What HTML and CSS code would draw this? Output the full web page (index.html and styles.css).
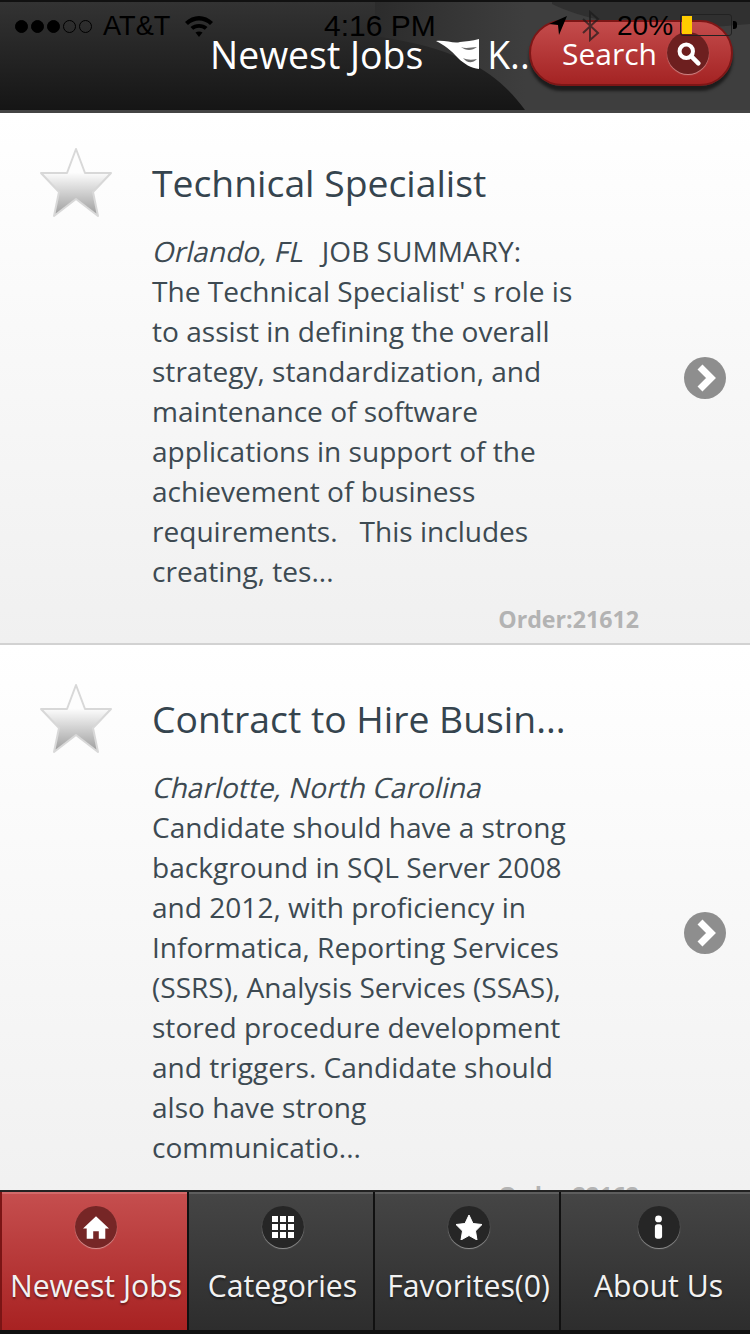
FILE: index.html
```html
<!DOCTYPE html>
<html lang="en">
<head>
  <meta charset="UTF-8">
  <meta name="viewport" content="width=device-width, initial-scale=1.0">
  <title>Newest Jobs</title>
  <link rel="stylesheet" href="styles.css">
</head>
<body>
  <div class="screen">
    <header class="topbar">
      <svg class="swoosh" width="750" height="108" viewBox="0 0 750 108">
        <defs>
          <linearGradient id="swooshFill" x1="0" y1="0" x2="1" y2="0">
            <stop offset="0" stop-color="#2c2c2c"/>
            <stop offset="0.400" stop-color="#3e3e3e"/>
          </linearGradient>
        </defs>
        <path d="M375 0 H750 V108 H525 C500 75 470 48 375 34 Z" fill="url(#swooshFill)"/>
        <path d="M552 2 C590 20 650 32 750 22 V0 H552 Z" fill="#303030"/>
      </svg>

      <div class="status">
        <div class="status-left">
          <span class="dots"><i class="on"></i><i class="on"></i><i class="on"></i><i></i><i></i></span>
          <span class="carrier">AT&amp;T</span>
          <svg class="wifi" width="30" height="24" viewBox="0 0 30 24">
            <path d="M1 8 C9 0 21 0 29 8 L26 11 C20 5 10 5 4 11 Z" fill="#000"/>
            <path d="M6.500 13 C11 9 19 9 23.500 13 L20.800 15.700 C17.500 13 12.500 13 9.200 15.700 Z" fill="#000"/>
            <path d="M11.500 18.500 C13.500 17 16.500 17 18.500 18.500 L15 23 Z" fill="#000"/>
          </svg>
        </div>
        <div class="status-time">4:16 PM</div>
        <div class="status-right">
          <svg width="20" height="22" viewBox="0 0 20 22"><path d="M19 1 L1 9 L10 10 L11 20 Z" fill="#000"/></svg>
          <svg class="bt" width="20" height="32" viewBox="0 0 20 32"><path d="M2 9 L17 23 L9 30 V2 L17 9 L2 23" fill="none" stroke="#1c1c1c" stroke-width="2"/></svg>
          <span class="pct">20%</span>
          <span class="battery"><b></b></span>
        </div>
      </div>

      <div class="bar">
        <h1 class="page-title">Newest Jobs</h1>
        <svg class="logo" width="44" height="32" viewBox="0 0 44 32">
          <path d="M0 3 C10 2 18 6 24 4 C30 3 36 3 43 1 L43 31 C35 30 28 26 22 20 C15 12 8 7 0 3 Z" fill="#fff"/>
          <path d="M25 9 C30 11 36 9 41 9 C36 13 30 13 25 9 Z M27 20 C31 22 36 22 41 21 C36 26 31 25 27 20 Z" fill="#6a6a6a"/>
        </svg>
        <span class="brand">K..</span>
        <button class="search-btn">
          <span>Search</span>
          <span class="round round-red">
            <svg width="25" height="25" viewBox="0 0 28 28">
              <circle cx="11.500" cy="11.500" r="7.500" fill="none" stroke="#fff" stroke-width="4.500"/>
              <path d="M17 17 L25 25" stroke="#fff" stroke-width="5" stroke-linecap="round"/>
            </svg>
          </span>
        </button>
      </div>
    </header>

    <main class="list">
      <article class="job">
        <svg class="star" width="76" height="74" viewBox="0 0 76 74">
          <defs>
            <linearGradient id="starFill" x1="0" y1="0" x2="0" y2="1">
              <stop offset="0.350" stop-color="#fdfdfd"/>
              <stop offset="1" stop-color="#9c9c9c"/>
            </linearGradient>
          </defs>
          <path d="M38 3 L47 27 L73 27 L55 46 L60 70 L38 53 L16 70 L21 46 L3 27 L29 27 Z" fill="url(#starFill)" stroke="#d8d8d8" stroke-width="2" stroke-linejoin="round"/>
        </svg>
        <div class="job-body">
          <h2 class="job-title">Technical Specialist</h2>
          <p class="job-text"><em>Orlando, FL</em>&nbsp;&nbsp; JOB SUMMARY: The Technical Specialist' s role is to assist in defining the overall strategy, standardization, and maintenance of software applications in support of the achievement of business requirements. &nbsp; This includes creating, tes...</p>
          <div class="job-order">Order:21612</div>
        </div>
        <svg class="chevron" width="44" height="44" viewBox="0 0 44 44">
          <circle cx="22" cy="22" r="21" fill="#8e8e8e"/>
          <path d="M17 11 L28 22 L17 33" fill="none" stroke="#fff" stroke-width="7"/>
        </svg>
      </article>

      <article class="job">
        <svg class="star" width="76" height="74" viewBox="0 0 76 74">
          <path d="M38 3 L47 27 L73 27 L55 46 L60 70 L38 53 L16 70 L21 46 L3 27 L29 27 Z" fill="url(#starFill)" stroke="#d8d8d8" stroke-width="2" stroke-linejoin="round"/>
        </svg>
        <div class="job-body">
          <h2 class="job-title">Contract to Hire Busin...</h2>
          <p class="job-text"><em>Charlotte, North Carolina</em> Candidate should have a strong background in SQL Server 2008 and 2012, with proficiency in Informatica, Reporting Services (SSRS), Analysis Services (SSAS), stored procedure development and triggers. Candidate should also have strong communicatio...</p>
          <div class="job-order">Order:22162</div>
        </div>
        <svg class="chevron" width="44" height="44" viewBox="0 0 44 44">
          <circle cx="22" cy="22" r="21" fill="#8e8e8e"/>
          <path d="M17 11 L28 22 L17 33" fill="none" stroke="#fff" stroke-width="7"/>
        </svg>
      </article>
    </main>

    <nav class="tabs">
      <a class="tab active">
        <span class="round">
          <svg width="26" height="23" viewBox="0 0 28 24"><path d="M14 0 L28 13 H24 V24 H17 V16 H11 V24 H4 V13 H0 Z" fill="#fff"/></svg>
        </span>
        <span class="tab-label">Newest Jobs</span>
      </a>
      <a class="tab">
        <span class="round">
          <svg width="22" height="22" viewBox="0 0 22 22" fill="#fff">
            <rect width="6" height="6"/><rect x="8" width="6" height="6"/><rect x="16" width="6" height="6"/>
            <rect y="8" width="6" height="6"/><rect x="8" y="8" width="6" height="6"/><rect x="16" y="8" width="6" height="6"/>
            <rect y="16" width="6" height="6"/><rect x="8" y="16" width="6" height="6"/><rect x="16" y="16" width="6" height="6"/>
          </svg>
        </span>
        <span class="tab-label">Categories</span>
      </a>
      <a class="tab">
        <span class="round">
          <svg width="26" height="25" viewBox="0 0 26 25"><path d="M13 0 L17 8.500 L26 9.500 L19.500 16 L21 25 L13 20.500 L5 25 L6.500 16 L0 9.500 L9 8.500 Z" fill="#fff" stroke="#fff" stroke-linejoin="round"/></svg>
        </span>
        <span class="tab-label">Favorites(0)</span>
      </a>
      <a class="tab">
        <span class="round">
          <svg width="9" height="24" viewBox="0 0 10 26"><circle cx="5" cy="4" r="3.800" fill="#fff"/><rect x="1" y="10" width="8" height="16" rx="3" fill="#fff"/></svg>
        </span>
        <span class="tab-label">About Us</span>
      </a>
    </nav>
  </div>
</body>
</html>
```

FILE: styles.css
```css
* {
  box-sizing: border-box;
}
body {
  margin: 0;
  font-family: "Open Sans", sans-serif;
  background-color: #fff;
}
.screen {
  width: 750px;
  height: 1334px;
  display: flex;
  flex-direction: column;
  overflow: hidden;
}

/* header */
.topbar {
  position: relative;
  height: 113px;
  flex: none;
  background: linear-gradient(#333333, #151515);
  border-top: 2px solid #111;
  border-bottom: 3px solid #444;
}
.swoosh {
  position: absolute;
  top: 0;
  left: 0;
}
.status {
  position: absolute;
  top: 6px;
  left: 0;
  width: 750px;
  height: 36px;
  z-index: 2;
  font-family: "Liberation Sans", Arial, sans-serif;
  font-size: 28px;
  color: #000;
}
.status-left {
  position: absolute;
  left: 15px;
  top: 0;
  display: flex;
  align-items: center;
  height: 36px;
}
.dots {
  display: flex;
  gap: 3px;
  margin-right: 11px;
}
.dots i {
  width: 13px;
  height: 13px;
  border-radius: 50%;
  border: 1px solid #000;
}
.dots i.on {
  background-color: #000;
}
.carrier {
  font-size: 27.200px;
}
.wifi {
  margin-left: 14px;
}
.status-time {
  position: absolute;
  left: 324px;
  top: 0;
  font-size: 30px;
  line-height: 36px;
}
.status-right {
  position: absolute;
  left: 548px;
  top: 0;
  height: 36px;
  display: flex;
  align-items: center;
}
.bt {
  margin-left: 13px;
  opacity: 0.7;
}
.pct {
  margin-left: 16px;
}
.battery {
  position: relative;
  width: 52px;
  height: 22px;
  margin: -2px 0 0 7px;
  border: 1px solid #222;
  border-radius: 3px;
}
.battery::after {
  content: "";
  position: absolute;
  right: -6px;
  top: 6px;
  width: 4px;
  height: 8px;
  background-color: #000;
  border-radius: 0 3px 3px 0;
}
.battery b {
  display: block;
  width: 10px;
  height: 18px;
  margin: 1px;
  background-color: #ffcc00;
}
.bar {
  position: relative;
  height: 104px;
  display: flex;
  align-items: center;
  padding: 0 17px 0 210px;
}
.page-title {
  margin: 0;
  font-size: 37.400px;
  font-weight: 400;
  color: #fff;
  white-space: nowrap;
}
.logo {
  margin-left: 13px;
  flex: none;
}
.brand {
  width: 38px;
  margin-left: 7px;
  font-size: 37.400px;
  color: #fff;
  white-space: nowrap;
}
.search-btn {
  margin: -2px 0 0 auto;
  width: 204px;
  height: 66px;
  flex: none;
  display: flex;
  align-items: center;
  gap: 10px;
  padding: 0 25px 0 31px;
  border: 2px solid #7d1616;
  border-radius: 33px;
  background: linear-gradient(#c44c4c, #a42323);
  box-shadow: 0 5px 3px rgba(0, 0, 0, 0.55);
  font-family: "Open Sans", sans-serif;
  font-size: 30px;
  color: #fff;
}
.round {
  width: 42px;
  height: 42px;
  flex: none;
  display: flex;
  align-items: center;
  justify-content: center;
  border-radius: 50%;
  background-color: #262626;
  box-shadow: 0 1px 1px rgba(255, 255, 255, 0.45);
}
.round-red {
  background-color: #6d1f1f;
}

/* job list */
.list {
  flex: 1;
  min-height: 0;
  overflow: hidden;
}
.job {
  display: flex;
  align-items: center;
  position: relative;
  height: 532px;
  padding: 0 23px 0 152px;
  background: linear-gradient(#ffffff, #f0f0f0);
  border-bottom: 2px solid #d2d2d2;
}
.job + .job {
  height: 578px;
}
.star {
  position: absolute;
  left: 38px;
  top: 33px;
}
.job + .job .star {
  top: 37px;
}
.job-body {
  width: 422px;
  align-self: flex-start;
}
.job-title {
  margin: 40px 0 0;
  font-size: 37.300px;
  line-height: 60px;
  font-weight: 400;
  color: #35444e;
  white-space: nowrap;
}
.job + .job .job-title {
  margin-top: 44px;
}
.job-text {
  margin: 18px 0 0;
  font-size: 28.070px;
  line-height: 40px;
  color: #3d4a52;
}
.job-text em {
  display: inline-block;
  margin: 0 -5px 0 2px;
  font-style: normal;
  transform: skewX(-13deg);
}
.job-order {
  margin-top: 12px;
  width: 487px;
  text-align: right;
  font-size: 23.200px;
  font-weight: 700;
  color: #b3b3b3;
}
.chevron {
  flex: none;
  margin-left: auto;
}

/* bottom tabs */
.tabs {
  height: 144px;
  flex: none;
  display: grid;
  grid-template-columns: 189px 186px 186px 189px;
  background-color: #111;
  border-top: 2px solid #222;
  border-bottom: 4px solid #111;
}
.tab {
  display: flex;
  flex-direction: column;
  align-items: center;
  padding: 12px 0 0 3px;
  margin-right: 2px;
  background: linear-gradient(#454545, #2d2d2d);
  border-top: 2px solid #5e5e5e;
}
.tab:last-child {
  margin-right: 0;
  padding-left: 6px;
}
.tab.active {
  margin-left: 2px;
  background: linear-gradient(#c54e4e, #a82222);
  border-top-color: #d26a6a;
  box-shadow: -2px 0 0 #7a1515;
}
.tab.active .round {
  background-color: #762626;
}
.tab-label {
  margin-top: 17px;
  font-size: 30.200px;
  line-height: 42px;
  color: #f2f2f2;
  white-space: nowrap;
  text-shadow: 0 2px 2px rgba(0, 0, 0, 0.4);
}
```
